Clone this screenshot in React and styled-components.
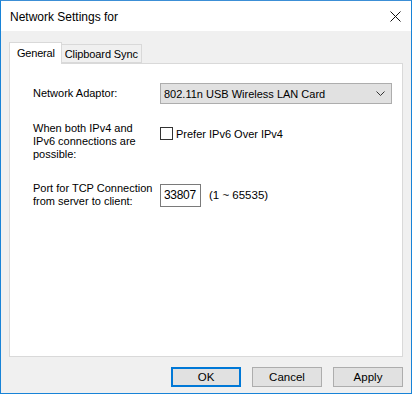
import React from "react";
import styled, { createGlobalStyle } from "styled-components";

const Global = createGlobalStyle`
  html, body { margin: 0; padding: 0; background: #fff; }
  * { box-sizing: border-box; }
`;

const Window = styled.div`
  width: 412px;
  height: 394px;
  border: 1px solid #1883d7;
  border-top-color: #3c8fd6;
  display: flex;
  flex-direction: column;
  background: #f0f0f0;
  font-family: "Liberation Sans", Arial, sans-serif;
  font-size: 11px;
  color: #000;
`;

const TitleBar = styled.div`
  height: 30px;
  background: #fff;
  display: flex;
  align-items: center;
  justify-content: space-between;
  padding: 0 10px 0 9px;
  flex-shrink: 0;
`;

const Title = styled.div`
  font-size: 12px;
  margin-top: 1px;
`;

const Body = styled.div`
  flex: 1;
  display: flex;
  flex-direction: column;
  padding: 11px 8px 0 8px;
`;

const Tabs = styled.div`
  display: flex;
  align-items: flex-end;
  height: 21px;
  position: relative;
  z-index: 1;
`;

const Tab = styled.div`
  height: ${(p) => (p.$active ? "22px" : "19px")};
  padding: ${(p) => (p.$active ? "3px 6px 0 7px" : "2px 3px 0 3px")};
  border: 1px solid #d9d9d9;
  border-bottom: ${(p) => (p.$active ? "none" : "1px solid #d9d9d9")};
  border-left: ${(p) => (p.$active ? "1px solid #d9d9d9" : "none")};
  background: ${(p) => (p.$active ? "#fff" : "#f0f0f0")};
  margin-bottom: ${(p) => (p.$active ? "-1px" : "0")};
  line-height: 14px;
  letter-spacing: ${(p) => (p.$active ? "-0.2px" : "-0.1px")};
`;

const Panel = styled.div`
  height: 294px;
  background: #fff;
  border: 1px solid #d9d9d9;
  padding: 19px 10px 0 23px;
  display: flex;
  flex-direction: column;
`;

const Row = styled.div`
  display: flex;
  align-items: ${(p) => p.$align || "center"};
  margin-top: ${(p) => p.$mt || 0}px;
`;

const Label = styled.div`
  width: 127px;
  line-height: 13px;
  flex-shrink: 0;
`;

const Select = styled.div`
  width: 232px;
  height: 21px;
  background: #e1e1e1;
  border: 1px solid #adadad;
  display: flex;
  align-items: center;
  justify-content: space-between;
  padding: 0 6px 0 3px;
`;

const CheckRow = styled.label`
  display: flex;
  align-items: center;
  gap: 3px;
  margin-top: 5px;
`;

const Box = styled.span`
  width: 13px;
  height: 13px;
  border: 1px solid #333;
  background: #fff;
  display: inline-block;
`;

const Input = styled.div`
  width: 41px;
  height: 23px;
  border: 1px solid #7a7a7a;
  background: #fff;
  display: flex;
  align-items: center;
  padding-left: 3px;
  font-size: 12px;
  letter-spacing: -0.3px;
`;

const Hint = styled.span`
  margin-left: 8px;
  font-size: 11.5px;
`;

const Footer = styled.div`
  display: flex;
  justify-content: flex-end;
  gap: 11px;
  margin-top: 10px;
`;

const Button = styled.div`
  width: 70px;
  height: 20px;
  background: #e1e1e1;
  border: ${(p) => (p.$default ? "2px solid #0078d7" : "1px solid #adadad")};
  display: flex;
  align-items: center;
  justify-content: center;
  font-size: 11.5px;
`;

export default function App() {
  return (
    <>
      <Global />
      <Window>
        <TitleBar>
          <Title>Network Settings for</Title>
          <svg width="11" height="11" viewBox="0 0 11 11">
            <path d="M0.5 0.5 L10.5 10.5 M10.5 0.5 L0.5 10.5" stroke="#111" strokeWidth="1" />
          </svg>
        </TitleBar>
        <Body>
          <Tabs>
            <Tab $active>General</Tab>
            <Tab>Clipboard Sync</Tab>
          </Tabs>
          <Panel>
            <Row>
              <Label>Network Adaptor:</Label>
              <Select>
                <span>802.11n USB Wireless LAN Card</span>
                <svg width="9" height="5" viewBox="0 0 9 5">
                  <path d="M0.5 0.5 L4.5 4.5 L8.5 0.5" fill="none" stroke="#333" strokeWidth="1" />
                </svg>
              </Select>
            </Row>
            <Row $align="flex-start" $mt={18}>
              <Label>
                When both IPv4 and
                <br />
                IPv6 connections are
                <br />
                possible:
              </Label>
              <CheckRow>
                <Box />
                <span>Prefer IPv6 Over IPv4</span>
              </CheckRow>
            </Row>
            <Row $mt={21}>
              <Label>
                Port for TCP Connection
                <br />
                from server to client:
              </Label>
              <Input>33807</Input>
              <Hint>(1 ~ 65535)</Hint>
            </Row>
          </Panel>
          <Footer>
            <Button $default>OK</Button>
            <Button>Cancel</Button>
            <Button>Apply</Button>
          </Footer>
        </Body>
      </Window>
    </>
  );
}
